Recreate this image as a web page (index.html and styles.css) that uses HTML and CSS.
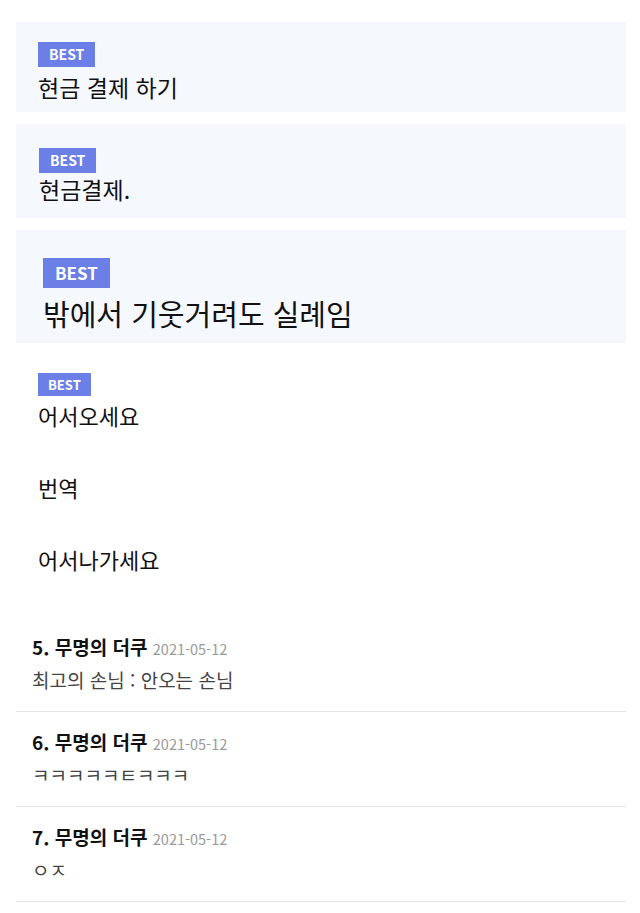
FILE: index.html
```html
<!DOCTYPE html>
<html lang="ko">
<head>
  <meta charset="UTF-8">
  <title>Best comments</title>
  <link rel="stylesheet" href="styles.css">
</head>
<body>

<!-- Best comments -->
<div class="best-list">
  <div class="best-card card-1">
    <span class="badge">BEST</span>
    <p class="best-text">현금 결제 하기</p>
  </div>
  <div class="best-card card-2">
    <span class="badge">BEST</span>
    <p class="best-text">현금결제.</p>
  </div>
  <div class="best-card card-3">
    <span class="badge badge-lg">BEST</span>
    <p class="best-text text-lg">밖에서 기웃거려도 실례임</p>
  </div>
  <div class="best-plain">
    <span class="badge badge-sm">BEST</span>
    <p class="plain-text first">어서오세요</p>
    <p class="plain-text">번역</p>
    <p class="plain-text">어서나가세요</p>
  </div>
</div>

<!-- Comment list -->
<ul class="comments">
  <li class="comment">
    <div class="comment-head"><strong>5. 무명의 더쿠</strong> <span class="date">2021-05-12</span></div>
    <div class="comment-body">최고의 손님 : 안오는 손님</div>
  </li>
  <li class="comment">
    <div class="comment-head"><strong>6. 무명의 더쿠</strong> <span class="date">2021-05-12</span></div>
    <div class="comment-body">ㅋㅋㅋㅋㅋㅌㅋㅋㅋ</div>
  </li>
  <li class="comment">
    <div class="comment-head"><strong>7. 무명의 더쿠</strong> <span class="date">2021-05-12</span></div>
    <div class="comment-body">ㅇㅈ</div>
  </li>
</ul>

</body>
</html>
```

FILE: styles.css
```css
body {
  margin: 0;
  background: #fff;
  color: #111;
  font-family: "Noto Sans CJK KR", "Noto Sans", sans-serif;
}

.best-list {
  padding: 22px 14px 0 16px;
}

.best-card,
.best-plain {
  display: flex;
  flex-direction: column;
  align-items: flex-start;
}

.best-card {
  background: #f5f8fd;
  margin-bottom: 12px;
}

.card-1 {
  padding: 20px 22px 9px;
}

.card-2 {
  padding: 24px 23px 13px;
}

.card-3 {
  padding: 28px 27px 12px;
}

.badge {
  background: #6b7fe6;
  color: #fff;
  font-weight: bold;
  font-size: 14px;
  line-height: 25px;
  padding: 0 11px;
}

.badge-lg {
  font-size: 17px;
  line-height: 30px;
  padding: 0 12px;
}

.badge-sm {
  font-size: 13px;
  line-height: 23px;
  padding: 0 10px;
}

.best-text {
  margin: 4px 0 0;
  font-size: 23px;
  line-height: 32px;
}

.card-2 .best-text {
  margin-top: 0;
}

.text-lg {
  margin-top: 7px;
  font-size: 29px;
  line-height: 36px;
}

.best-plain {
  padding: 18px 22px 0;
}

.plain-text {
  margin: 0;
  font-size: 22px;
  line-height: 30px;
  margin-top: 42px;
}

.plain-text.first {
  margin-top: 4px;
}

.comments {
  list-style: none;
  margin: 43px 14px 0 16px;
  padding: 0;
}

.comment {
  padding: 18px 16px 19px;
  border-bottom: 1px solid #e4e4e4;
}

.comment-head {
  font-size: 19px;
  line-height: 24px;
}

.date {
  font-size: 14.5px;
  line-height: 16px;
  color: #9a9a9a;
}

.comment-body {
  margin-top: 9px;
  font-size: 19px;
  line-height: 24px;
  color: #444;
}
```
